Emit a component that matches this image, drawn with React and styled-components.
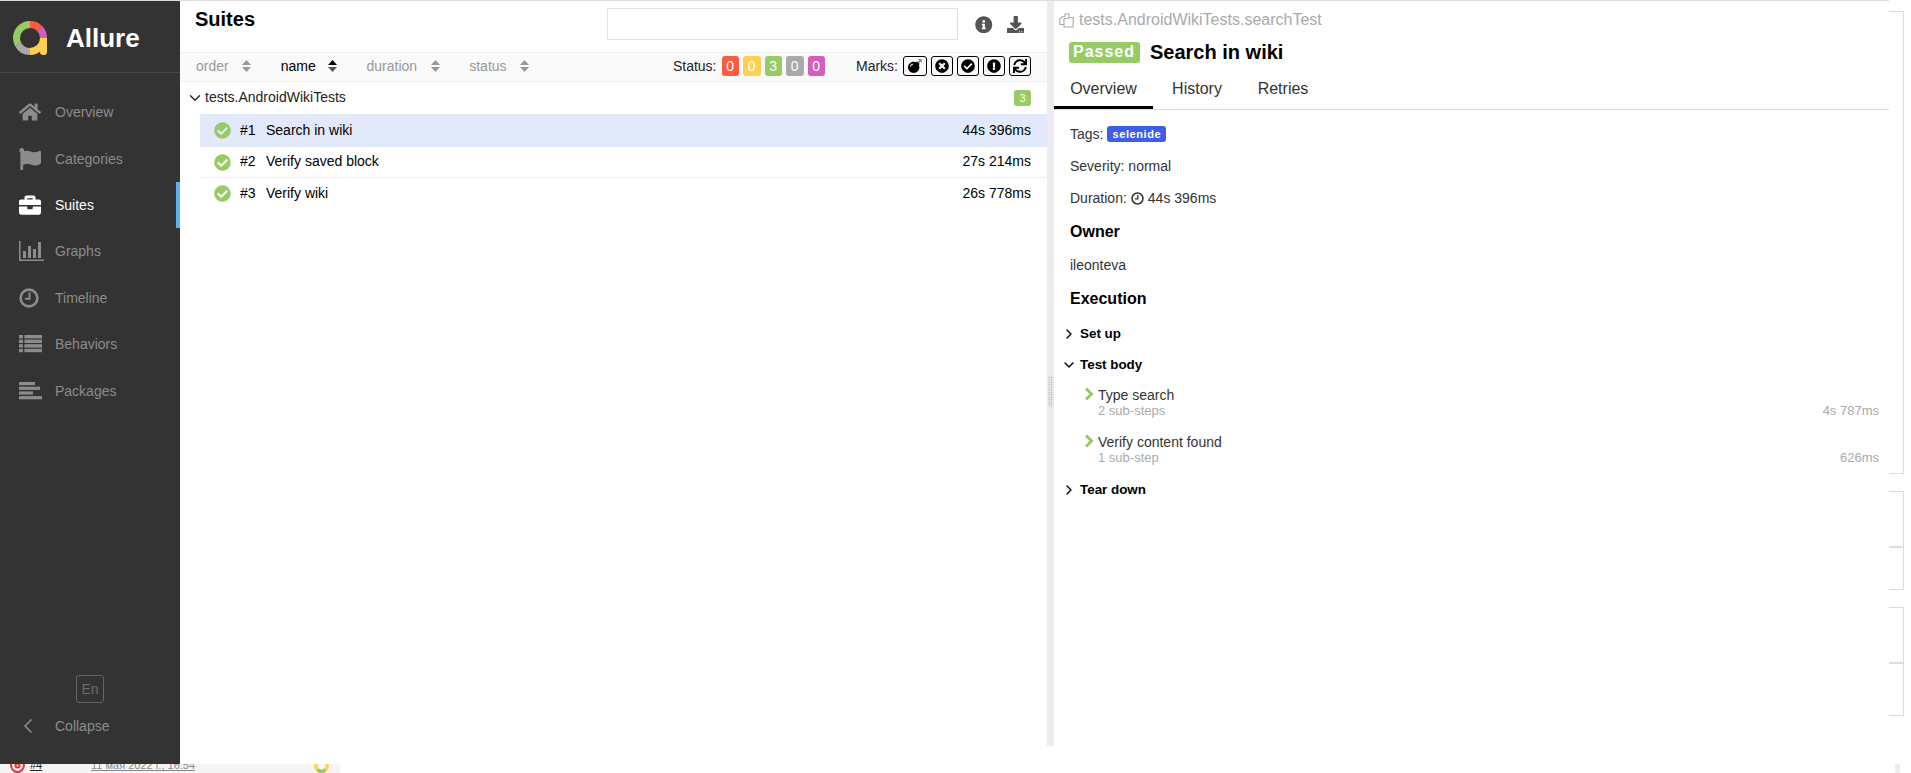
import React from 'react';
import styled, { createGlobalStyle } from 'styled-components';
import {
  FaHome, FaFlag, FaBriefcase, FaCheckCircle, FaInfoCircle, FaDownload, FaBomb,
  FaTimesCircle, FaExclamationCircle, FaSync,
} from 'react-icons/fa';
import { ChevronDown, ChevronRight, ChevronLeft } from 'lucide-react';

const GlobalStyle = createGlobalStyle`
  html, body {
    margin: 0;
    padding: 0;
    background: #fff;
    overflow: hidden;
  }
  * {
    box-sizing: border-box;
  }
  body {
    font-family: "Liberation Sans", Arial, sans-serif;
    font-size: 14px;
    color: #000;
  }
`;

const Page = styled.div`
  width: 1911px;
  height: 773px;
  display: flex;
  flex-direction: column;
  overflow: hidden;
`;

const TopRow = styled.div`
  display: flex;
  height: 764px;
`;

const Window = styled.div`
  width: 1889px;
  display: flex;
  border-top: 1px solid #ddd;
`;

const Sidebar = styled.nav`
  width: 180px;
  flex: none;
  background: #333;
  display: flex;
  flex-direction: column;
  padding-bottom: 15px;
`;

const Brand = styled.div`
  height: 72px;
  flex: none;
  display: flex;
  align-items: center;
  gap: 19px;
  padding: 3px 0 0 13px;
  border-bottom: 1px solid #4a4a4a;
  color: #fff;
  font-size: 26px;
  font-weight: 700;
`;

const NavList = styled.div`
  padding-top: 16px;
  display: flex;
  flex-direction: column;
`;

const NavItem = styled.div`
  height: 46.4px;
  display: flex;
  align-items: center;
  padding-left: 19px;
  color: ${(p) => (p.$active ? '#fff' : '#8c8c8c')};
  border-right: 4px solid ${(p) => (p.$active ? '#5eb0f2' : 'transparent')};
`;

const NavIcon = styled.span`
  width: 36px;
  height: 24px;
  display: flex;
  align-items: center;
  font-size: 22px;
`;

const SideFooter = styled.div`
  margin-top: auto;
  display: flex;
  flex-direction: column;
  align-items: stretch;
`;

const LangButton = styled.div`
  width: 28px;
  height: 28px;
  align-self: flex-start;
  margin-left: 76px;
  border: 1px solid #666;
  border-radius: 3px;
  color: #6a6a6a;
  display: flex;
  align-items: center;
  justify-content: center;
`;

const CollapseRow = styled.div`
  height: 46px;
  display: flex;
  align-items: center;
  color: #8c8c8c;
  padding-left: 16px;
  gap: 15px;
`;

const Pane = styled.section`
  height: 745px;
  display: flex;
  flex-direction: column;
  width: ${(p) => p.$width}px;
  flex: none;
`;

const PaneHead = styled.div`
  height: 51px;
  display: flex;
  align-items: flex-start;
`;

const PaneTitle = styled.h2`
  margin: 6px 0 0 15px;
  font-size: 20px;
  line-height: 24px;
  font-weight: 700;
`;

const SearchBox = styled.div`
  width: 351px;
  height: 32px;
  margin: 7px 0 0 auto;
  border: 1px solid #e2e2e2;
`;

const HeadIcons = styled.div`
  width: 89px;
  height: 33px;
  margin-top: 7px;
  padding-left: 17px;
  display: flex;
  align-items: center;
  gap: 14px;
  color: #555;
  font-size: 17.5px;
`;

const Toolbar = styled.div`
  height: 30px;
  display: flex;
  align-items: center;
  padding: 0 16px 2px;
  background: #fafafa;
  border-top: 1px solid #eee;
  border-bottom: 1px solid #eee;
`;

const SortItem = styled.div`
  width: ${(p) => p.$w}px;
  display: flex;
  align-items: center;
  color: ${(p) => (p.$active ? '#000' : '#999')};

  svg {
    margin-left: ${(p) => p.$gap}px;
  }
`;

const ToolLabel = styled.span`
  color: #222;
  margin: ${(p) => p.$m};
`;

const Pills = styled.div`
  display: flex;
  gap: 4px;
  margin-left: 5px;
`;

const Pill = styled.span`
  width: 17.5px;
  height: 20px;
  border-radius: 3px;
  background: ${(p) => p.$bg};
  color: #fff;
  display: flex;
  align-items: center;
  justify-content: center;
`;

const Marks = styled.div`
  display: flex;
  gap: 4px;
  margin-left: 5px;
`;

const MarkButton = styled.span`
  width: ${(p) => p.$w || 22}px;
  height: 20px;
  border: 1px solid #000;
  border-radius: 3px;
  display: flex;
  align-items: center;
  justify-content: center;
  font-size: 14px;
`;

const GroupRow = styled.div`
  height: 32px;
  display: flex;
  align-items: center;
  padding: 0 16px 0 6px;
  color: #222;
`;

const GroupName = styled.span`
  margin: 0 0 2px 1px;
  flex: 1;
`;

const CountBadge = styled.span`
  width: 17px;
  height: 16px;
  border-radius: 3px;
  background: #97cc64;
  color: #fff;
  font-size: 11px;
  display: flex;
  align-items: center;
  justify-content: center;
`;

const TestRow = styled.div`
  height: ${(p) => p.$h}px;
  margin-left: 20px;
  display: flex;
  align-items: center;
  padding: 0 16px 2px 14px;
  background: ${(p) => (p.$selected ? '#e1e9fb' : 'transparent')};
  border-bottom: ${(p) => (p.$line ? '1px solid #eee' : 'none')};
`;

const PassIcon = styled.span`
  color: #97cc64;
  font-size: 17px;
  display: flex;
  width: 26px;
  margin-top: 2px;
`;

const TestOrder = styled.span`
  width: 26px;
`;

const TestName = styled.span`
  flex: 1;
`;

const Splitter = styled.div`
  width: 7px;
  height: 745px;
  flex: none;
  background: #eaecef;
  display: flex;
  align-items: center;
  justify-content: center;
  padding-top: 36px;
`;

const Grip = styled.div`
  width: 5px;
  height: 31px;
  background-image: radial-gradient(#bfc4c9 0.8px, transparent 0.9px);
  background-size: 2.5px 2.5px;
`;

const TitlePath = styled.div`
  display: flex;
  align-items: center;
  gap: 5px;
  margin: 10px 0 0 5px;
  height: 18px;
  color: #aaa;
  font-size: 16px;
`;

const TitleLine = styled.div`
  display: flex;
  align-items: center;
  gap: 10px;
  margin: 12px 0 0 15px;
  height: 22px;
`;

const StatusBadge = styled.span`
  height: 21px;
  padding: 0 4px;
  width: 71px;
  border-radius: 3px;
  background: #97cc64;
  color: #fff;
  font-size: 16px;
  font-weight: 700;
  letter-spacing: 1px;
  display: flex;
  align-items: center;
`;

const TestTitle = styled.h2`
  margin: 0;
  font-size: 20px;
  font-weight: 700;
`;

const Tabs = styled.div`
  display: flex;
  height: 40px;
  margin-top: 7px;
  border-bottom: 1px solid #ddd;
`;

const Tab = styled.div`
  padding: 9px 0 0;
  width: ${(p) => p.$w}px;
  text-align: center;
  font-size: 16px;
  color: #333;
  line-height: 19px;
  border-bottom: 3px solid ${(p) => (p.$active ? '#000' : 'transparent')};
  height: 39px;
`;

const Body = styled.div`
  padding: 8px 10px 0 16px;
  display: flex;
  flex-direction: column;
`;

const InfoLine = styled.div`
  height: 32px;
  display: flex;
  align-items: center;
  gap: 4px;
  color: #333;
`;

const Tag = styled.span`
  height: 16px;
  padding: 0 5px;
  border-radius: 3px;
  background: #3f5ee8;
  color: #fff;
  font-size: 11px;
  font-weight: 700;
  letter-spacing: 0.6px;
  display: flex;
  align-items: center;
`;

const SectionTitle = styled.h3`
  margin: 0;
  height: 35px;
  display: flex;
  align-items: center;
  font-size: 16px;
  font-weight: 700;
`;

const Stages = styled.div`
  padding-top: 2px;
  display: flex;
  flex-direction: column;
`;

const StageRow = styled.div`
  height: 31px;
  display: flex;
  align-items: center;
  gap: 3px;
  margin-left: -9px;
  font-size: 13.4px;
  font-weight: 700;
`;

const StepRow = styled.div`
  height: 47px;
  display: flex;
  align-items: flex-start;
  margin-left: 14px;
  padding-top: 7px;
`;

const StepArrow = styled.span`
  width: 14px;
  height: 14px;
  display: flex;
  align-items: center;
`;

const StepText = styled.div`
  flex: 1;
  color: #333;
  line-height: 16px;
`;

const SubSteps = styled.div`
  color: #aaa;
  font-size: 13px;
  line-height: 15px;
`;

const StepTime = styled.span`
  color: #aaa;
  font-size: 13px;
  margin-top: 16px;
`;

const Backdrop = styled.div`
  width: 15px;
  flex: none;
  padding-top: 11px;
  display: flex;
  flex-direction: column;
`;

const Frame = styled.div`
  height: ${(p) => p.$h}px;
  margin-bottom: ${(p) => p.$mb || 0}px;
  border: 1px solid #ddd;
  border-left: none;
`;

const BottomRow = styled.div`
  height: 9px;
  display: flex;
  overflow: hidden;
`;

const Strip = styled.div`
  width: 340px;
  background: #f5f5f5;
  display: flex;
  align-items: flex-end;
  padding-bottom: 2px;
  font-size: 11px;
  line-height: 12px;
`;

const StripIcon = styled.svg`
  width: 15px;
  height: 15px;
  flex: none;
  margin: 0 ${(p) => p.$mr}px -2px ${(p) => p.$ml}px;
`;

const StripLink = styled.span`
  color: ${(p) => p.$color};
  width: ${(p) => p.$w}px;
  flex: none;
  text-decoration: underline;
  white-space: nowrap;
`;

const ScrollStub = styled.div`
  width: 5px;
  margin-left: 1555px;
  background: #eee;
`;

function Logo() {
  const segs = [
    ['#fd5a3e', '13 87', 0],
    ['#d35ebe', '12 88', -13],
    ['#ffd050', '25 75', -25],
    ['#aaa', '17 83', -50],
    ['#97cc64', '33 67', -67],
  ];
  return (
    <svg width="34" height="34" viewBox="0 0 34 34">
      {segs.map(([color, dash, offset]) => (
        <circle
          key={color}
          cx="17"
          cy="17"
          r="13.5"
          fill="none"
          stroke={color}
          strokeWidth="7"
          pathLength="100"
          strokeDasharray={dash}
          strokeDashoffset={offset}
          transform="rotate(-90 17 17)"
        />
      ))}
      <path d="M27 17h7v14a3 3 0 0 1-3 3h-1a3 3 0 0 1-3-3z" fill="#ffd050" />
    </svg>
  );
}

function BarsIcon() {
  return (
    <svg width="26" height="20" viewBox="0 0 26 20" fill="currentColor">
      <rect x="0" y="0" width="1.5" height="20" />
      <rect x="0" y="18.5" width="25" height="1.5" />
      <rect x="4" y="10" width="3" height="7" />
      <rect x="9" y="5" width="3" height="12" />
      <rect x="14" y="8" width="3" height="9" />
      <rect x="19" y="1" width="3" height="16" />
    </svg>
  );
}

function ClockIcon({ size = 20, weight = 2.6 }) {
  return (
    <svg width={size} height={size} viewBox="0 0 20 20" fill="none" stroke="currentColor" strokeWidth={weight}>
      <circle cx="10" cy="10" r="8.4" />
      <path d="M10.5 4.5v6.2h-4.5" strokeWidth="2" />
    </svg>
  );
}

function ListIcon() {
  return (
    <svg width="23" height="18" viewBox="0 0 23 18" fill="currentColor">
      {[0, 4.6, 9.2, 13.8].map((y) => (
        <g key={y}>
          <rect x="0" y={y} width="4" height="3.4" />
          <rect x="5.4" y={y} width="17.6" height="3.4" />
        </g>
      ))}
    </svg>
  );
}

function AlignIcon() {
  return (
    <svg width="23" height="18" viewBox="0 0 23 18" fill="currentColor">
      <rect x="0" y="0" width="16" height="3.2" />
      <rect x="0" y="4.7" width="21" height="3.2" />
      <rect x="0" y="9.4" width="14" height="3.2" />
      <rect x="0" y="14.1" width="23" height="3.2" />
    </svg>
  );
}

function SortIcon({ up = '#999', down = '#999' }) {
  return (
    <svg width="9" height="12" viewBox="0 0 9 12">
      <path d="M4.5 0L9 5H0z" fill={up} />
      <path d="M4.5 12L0 7h9z" fill={down} />
    </svg>
  );
}

function CopyIcon() {
  return (
    <svg width="15" height="15" viewBox="0 0 15 15" fill="none" stroke="#aaa" strokeWidth="1.1">
      <path d="M6 3.5V1h4v3M6 3.5H3.5L.8 6v5.5H5" />
      <path d="M5 5.5h4l1-1h4.2V14H5z" />
    </svg>
  );
}

function StepChevron() {
  return (
    <svg width="10" height="14" viewBox="0 0 10 14" fill="none" stroke="#97cc64" strokeWidth="3">
      <path d="M2 1.5L7.5 7L2 12.5" />
    </svg>
  );
}

const navItems = [
  ['Overview', <FaHome />],
  ['Categories', <FaFlag />],
  ['Suites', <FaBriefcase />, true],
  ['Graphs', <BarsIcon />],
  ['Timeline', <ClockIcon />],
  ['Behaviors', <ListIcon />],
  ['Packages', <AlignIcon />],
];

const sorts = [
  { label: 'order', w: 85, gap: 13 },
  { label: 'name', w: 86, gap: 12.5, active: true },
  { label: 'duration', w: 103, gap: 13.5 },
  { label: 'status', w: 110, gap: 13 },
];

const statuses = [
  ['#fd5a3e', 0],
  ['#ffd050', 0],
  ['#97cc64', 3],
  ['#aaa', 0],
  ['#d35ebe', 0],
];

const tests = [
  { order: '#1', name: 'Search in wiki', time: '44s 396ms', h: 33, selected: true },
  { order: '#2', name: 'Verify saved block', time: '27s 214ms', h: 31, line: true },
  { order: '#3', name: 'Verify wiki', time: '26s 778ms', h: 31 },
];

const steps = [
  { name: 'Type search', sub: '2 sub-steps', time: '4s 787ms' },
  { name: 'Verify content found', sub: '1 sub-step', time: '626ms' },
];

export default function App() {
  return (
    <Page>
      <GlobalStyle />
      <TopRow>
        <Window>
          <Sidebar>
            <Brand>
              <Logo />
              Allure
            </Brand>
            <NavList>
              {navItems.map(([label, icon, active]) => (
                <NavItem key={label} $active={active}>
                  <NavIcon>{icon}</NavIcon>
                  {label}
                </NavItem>
              ))}
            </NavList>
            <SideFooter>
              <LangButton>En</LangButton>
              <CollapseRow>
                <ChevronLeft size={24} strokeWidth={1.7} />
                Collapse
              </CollapseRow>
            </SideFooter>
          </Sidebar>

          <Pane $width={867}>
            <PaneHead>
              <PaneTitle>Suites</PaneTitle>
              <SearchBox />
              <HeadIcons>
                <FaInfoCircle />
                <FaDownload />
              </HeadIcons>
            </PaneHead>
            <Toolbar>
              {sorts.map((s) => (
                <SortItem key={s.label} $w={s.w} $gap={s.gap} $active={s.active}>
                  {s.label}
                  <SortIcon up={s.active ? '#000' : '#999'} down={s.active ? '#555' : '#999'} />
                </SortItem>
              ))}
              <ToolLabel $m="0 0 0 94px">Status:</ToolLabel>
              <Pills>
                {statuses.map(([bg, n], i) => (
                  <Pill key={i} $bg={bg}>{n}</Pill>
                ))}
              </Pills>
              <ToolLabel $m="0 0 0 31px">Marks:</ToolLabel>
              <Marks>
                <MarkButton $w={24}><FaBomb /></MarkButton>
                <MarkButton><FaTimesCircle /></MarkButton>
                <MarkButton><FaCheckCircle /></MarkButton>
                <MarkButton><FaExclamationCircle /></MarkButton>
                <MarkButton><FaSync /></MarkButton>
              </Marks>
            </Toolbar>
            <GroupRow>
              <ChevronDown size={18} strokeWidth={1.8} />
              <GroupName>tests.AndroidWikiTests</GroupName>
              <CountBadge>3</CountBadge>
            </GroupRow>
            {tests.map((t) => (
              <TestRow key={t.order} $h={t.h} $selected={t.selected} $line={t.line}>
                <PassIcon><FaCheckCircle /></PassIcon>
                <TestOrder>{t.order}</TestOrder>
                <TestName>{t.name}</TestName>
                {t.time}
              </TestRow>
            ))}
          </Pane>

          <Splitter>
            <Grip />
          </Splitter>

          <Pane $width={835}>
            <TitlePath>
              <CopyIcon />
              tests.AndroidWikiTests.searchTest
            </TitlePath>
            <TitleLine>
              <StatusBadge>Passed</StatusBadge>
              <TestTitle>Search in wiki</TestTitle>
            </TitleLine>
            <Tabs>
              <Tab $w={99} $active>Overview</Tab>
              <Tab $w={88}>History</Tab>
              <Tab $w={84}>Retries</Tab>
            </Tabs>
            <Body>
              <InfoLine>Tags: <Tag>selenide</Tag></InfoLine>
              <InfoLine>Severity: normal</InfoLine>
              <InfoLine>Duration: <ClockIcon size={13} weight={2.4} /> 44s 396ms</InfoLine>
              <SectionTitle>Owner</SectionTitle>
              <InfoLine>ileonteva</InfoLine>
              <SectionTitle>Execution</SectionTitle>
              <Stages>
                <StageRow><ChevronRight size={16} strokeWidth={2} />Set up</StageRow>
                <StageRow><ChevronDown size={16} strokeWidth={2} />Test body</StageRow>
                {steps.map((s) => (
                  <StepRow key={s.name}>
                    <StepArrow><StepChevron /></StepArrow>
                    <StepText>
                      {s.name}
                      <SubSteps>{s.sub}</SubSteps>
                    </StepText>
                    <StepTime>{s.time}</StepTime>
                  </StepRow>
                ))}
                <StageRow><ChevronRight size={16} strokeWidth={2} />Tear down</StageRow>
              </Stages>
            </Body>
          </Pane>
        </Window>
        <Backdrop>
          <Frame $h={463} $mb={17} />
          <Frame $h={56} />
          <Frame $h={43} $mb={17} />
          <Frame $h={56} />
          <Frame $h={53} />
        </Backdrop>
      </TopRow>
      <BottomRow>
        <Strip>
          <StripIcon $ml={10} $mr={5} viewBox="0 0 15 15" fill="none" stroke="#e8303a" strokeWidth="2">
            <circle cx="7.5" cy="7.5" r="6.4" />
            <circle cx="7.5" cy="7.5" r="2" />
          </StripIcon>
          <StripLink $color="#222" $w={61}>#4</StripLink>
          <StripLink $color="#888" $w={223}>11 мая 2022 г., 16:54</StripLink>
          <StripIcon $ml={0} $mr={0} viewBox="0 0 15 15" fill="none" strokeWidth="3.4">
            <circle cx="7.5" cy="7.5" r="5.8" stroke="#ffd050" />
            <path d="M3.5 11.8a5.8 5.8 0 0 0 8 0" stroke="#97cc64" />
          </StripIcon>
        </Strip>
        <ScrollStub />
      </BottomRow>
    </Page>
  );
}
